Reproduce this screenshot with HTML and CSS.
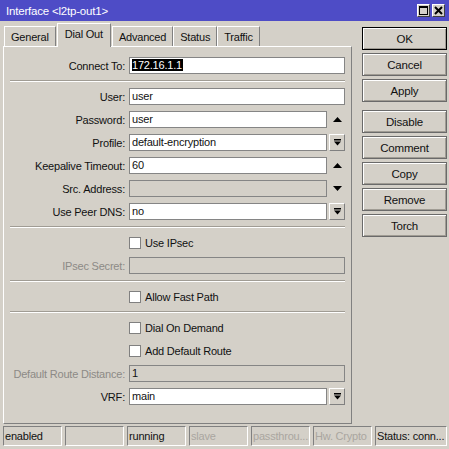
FILE: index.html
```html
<!DOCTYPE html>
<html lang="en">
<head>
<meta charset="UTF-8">
<title>Interface &lt;l2tp-out1&gt;</title>
<link rel="stylesheet" href="styles.css">
</head>
<body>
<div class="titlebar">
    <span class="title">Interface &lt;l2tp-out1&gt;</span>
    <div class="winbtns">
        <span class="winbtn">
            <svg width="11" height="11" viewBox="0 0 11 11"><rect x="1.5" y="1.5" width="8" height="8" fill="none" stroke="#000"/><rect x="1" y="1" width="9" height="2" fill="#000"/></svg>
        </span>
        <span class="winbtn">
            <svg width="11" height="11" viewBox="0 0 11 11"><path d="M2 2 L9 9 M9 2 L2 9" stroke="#000" stroke-width="2"/></svg>
        </span>
    </div>
</div>

<div class="main">
    <div class="left">
        <div class="tabs">
            <span class="tab">General</span>
            <span class="tab active">Dial Out</span>
            <span class="tab">Advanced</span>
            <span class="tab">Status</span>
            <span class="tab">Traffic</span>
        </div>
        <div class="panel">
            <div class="row">
                <label>Connect To:</label>
                <div class="field"><span class="input"><span class="sel">172.16.1.1</span></span></div>
            </div>
            <div class="sep"></div>
            <div class="row">
                <label>User:</label>
                <div class="field"><span class="input">user</span></div>
            </div>
            <div class="row">
                <label>Password:</label>
                <div class="field"><span class="input">user</span><span class="spin"><svg width="9" height="5" viewBox="0 0 9 5"><polygon points="0,5 4.5,0 9,5" fill="#000"/></svg></span></div>
            </div>
            <div class="row">
                <label>Profile:</label>
                <div class="field"><span class="input">default-encryption</span><span class="drop"><svg width="7" height="7" viewBox="0 0 7 7"><rect x="0" y="0" width="7" height="1.5" fill="#000"/><polygon points="0,2.5 7,2.5 3.5,6.5" fill="#000"/></svg></span></div>
            </div>
            <div class="row">
                <label>Keepalive Timeout:</label>
                <div class="field"><span class="input">60</span><span class="spin"><svg width="9" height="5" viewBox="0 0 9 5"><polygon points="0,5 4.5,0 9,5" fill="#000"/></svg></span></div>
            </div>
            <div class="row">
                <label>Src. Address:</label>
                <div class="field"><span class="input disabled"></span><span class="spin"><svg width="9" height="5" viewBox="0 0 9 5"><polygon points="0,0 9,0 4.5,5" fill="#000"/></svg></span></div>
            </div>
            <div class="row">
                <label>Use Peer DNS:</label>
                <div class="field"><span class="input">no</span><span class="drop"><svg width="7" height="7" viewBox="0 0 7 7"><rect x="0" y="0" width="7" height="1.5" fill="#000"/><polygon points="0,2.5 7,2.5 3.5,6.5" fill="#000"/></svg></span></div>
            </div>
            <div class="sep"></div>
            <div class="row">
                <span></span>
                <div class="check"><span class="box"></span>Use IPsec</div>
            </div>
            <div class="row">
                <label class="off">IPsec Secret:</label>
                <div class="field"><span class="input disabled"></span></div>
            </div>
            <div class="sep"></div>
            <div class="row">
                <span></span>
                <div class="check"><span class="box"></span>Allow Fast Path</div>
            </div>
            <div class="sep"></div>
            <div class="row">
                <span></span>
                <div class="check"><span class="box"></span>Dial On Demand</div>
            </div>
            <div class="row">
                <span></span>
                <div class="check"><span class="box"></span>Add Default Route</div>
            </div>
            <div class="row">
                <label class="off">Default Route Distance:</label>
                <div class="field"><span class="input disabled">1</span></div>
            </div>
            <div class="row">
                <label>VRF:</label>
                <div class="field"><span class="input">main</span><span class="drop"><svg width="7" height="7" viewBox="0 0 7 7"><rect x="0" y="0" width="7" height="1.5" fill="#000"/><polygon points="0,2.5 7,2.5 3.5,6.5" fill="#000"/></svg></span></div>
            </div>
        </div>
    </div>

    <div class="buttons">
        <span class="btn default">OK</span>
        <span class="btn">Cancel</span>
        <span class="btn">Apply</span>
        <span class="btn group">Disable</span>
        <span class="btn">Comment</span>
        <span class="btn">Copy</span>
        <span class="btn">Remove</span>
        <span class="btn">Torch</span>
    </div>
</div>

<div class="statusbar">
    <span class="cell">enabled</span>
    <span class="cell"></span>
    <span class="cell">running</span>
    <span class="cell off">slave</span>
    <span class="cell off">passthrou...</span>
    <span class="cell off">Hw. Crypto</span>
    <span class="cell wide">Status: conn...</span>
</div>
</body>
</html>
```

FILE: styles.css
```css
body {
    margin: 0;
    width: 449px;
    height: 449px;
    overflow: hidden;
    background-color: #d4d0c8;
    font-family: "Liberation Sans", Arial, sans-serif;
    font-size: 11px;
    letter-spacing: -0.2px;
    color: #111;
}

.titlebar {
    height: 21px;
    background-color: #4e4cc6;
    color: #fff;
    display: flex;
    align-items: center;
    justify-content: space-between;
    padding: 0 4px 0 6px;
    font-size: 11.5px;
}

.winbtns {
    display: flex;
    gap: 2px;
}

.winbtn {
    width: 13px;
    height: 13px;
    box-sizing: border-box;
    background-color: #d4d0c8;
    border: 1px solid;
    border-color: #fff #404040 #404040 #fff;
    display: flex;
    align-items: center;
    justify-content: center;
}

.main {
    display: flex;
    height: 404px;
    padding-left: 3px;
    gap: 10px;
}

.left {
    width: 349px;
    display: flex;
    flex-direction: column;
}

.tabs {
    display: flex;
    align-items: flex-end;
    height: 24px;
    margin-top: 2px;
    padding-left: 1px;
}

.tab {
    height: 21px;
    box-sizing: border-box;
    padding: 0 6px 1px 6px;
    border: 1px solid;
    border-color: #fff #808080 transparent #fff;
    border-bottom: none;
    display: flex;
    align-items: center;
    background-color: #d4d0c8;
}

.tab.active {
    height: 24px;
    position: relative;
    z-index: 1;
    padding: 0 7px 3px 7px;
    margin: 0 1px;
}

.panel {
    height: 378px;
    margin-top: -1px;
    box-sizing: border-box;
    border: 1px solid;
    border-color: #fff #808080 #808080 #fff;
    padding-top: 7px;
}

.row {
    display: grid;
    grid-template-columns: 121px 1fr;
    column-gap: 4px;
    height: 23px;
    align-items: center;
    padding-right: 6px;
}

.row label {
    text-align: right;
    white-space: nowrap;
}

.off {
    color: #8c8a86;
}

.field {
    display: flex;
    align-items: center;
    gap: 2px;
}

.input {
    flex: 1;
    height: 17px;
    box-sizing: border-box;
    border: 1px solid #858585;
    background-color: #fff;
    padding: 0 2px;
    line-height: 15px;
    white-space: nowrap;
}

.input.disabled {
    background-color: #d4d0c8;
}

.sel {
    background-color: #000;
    color: #fff;
    padding: 0 1px 0 0;
}

.spin {
    width: 16px;
    height: 17px;
    display: flex;
    align-items: center;
    justify-content: center;
}

.drop {
    width: 16px;
    height: 17px;
    box-sizing: border-box;
    border: 1px solid;
    border-color: #fff #808080 #808080 #fff;
    display: flex;
    align-items: center;
    justify-content: center;
}

.check {
    display: flex;
    align-items: center;
    gap: 4px;
}

.box {
    width: 12px;
    height: 12px;
    box-sizing: border-box;
    border: 1px solid #808080;
    background-color: #fff;
}

.sep {
    height: 2px;
    margin: 3px 6px;
    border-top: 1px solid #a09c94;
    border-bottom: 1px solid #fff;
    box-sizing: border-box;
}

.buttons {
    width: 85px;
    padding-top: 6px;
    display: flex;
    flex-direction: column;
    gap: 3px;
}

.btn {
    height: 23px;
    box-sizing: border-box;
    border: 1px solid #6a6a6a;
    box-shadow: inset 1px 1px #fff, inset -1px -1px #a09c94;
    display: flex;
    align-items: center;
    justify-content: center;
    font-size: 11.5px;
}

.btn.default {
    border-color: #000;
}

.btn.group {
    margin-top: 5px;
}

.statusbar {
    display: flex;
    gap: 3px;
    padding: 1px 2px 0 3px;
}

.cell {
    width: 59px;
    height: 20px;
    box-sizing: border-box;
    border: 1px solid;
    border-color: #808080 #fff #fff #808080;
    padding-left: 1px;
    display: flex;
    align-items: center;
    white-space: nowrap;
    overflow: hidden;
}

.cell.off {
    color: #aaa6a0;
}

.cell.wide {
    flex: 1;
    width: auto;
}
```
